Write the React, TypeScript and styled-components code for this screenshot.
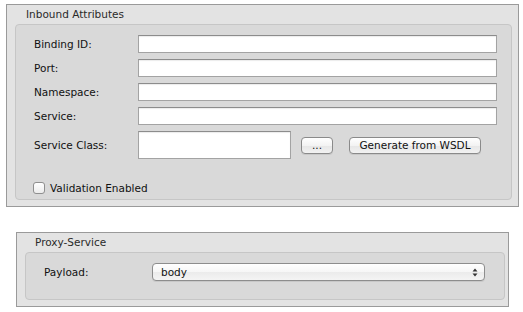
import React from "react";
import styled, { createGlobalStyle } from "styled-components";

const Global = createGlobalStyle`
  html, body { margin: 0; padding: 0; background: #ffffff; }
  body { font-family: "DejaVu Sans", "Liberation Sans", sans-serif; font-size: 11px; color: #1e1e1e; }
`;

const Page = styled.div`
  width: 523px;
  height: 312px;
  box-sizing: border-box;
  padding: 4px 0 0 6px;
  display: flex;
  flex-direction: column;
`;

const Group = styled.section<{ $w: number; $ml: number; $mt: number; $pr: number }>`
  box-sizing: border-box;
  width: ${(p) => p.$w}px;
  margin-left: ${(p) => p.$ml}px;
  margin-top: ${(p) => p.$mt}px;
  background: #e3e3e3;
  border: 1px solid #9a9a9a;
  padding: 0 ${(p) => p.$pr}px 6px 8px;
  display: flex;
  flex-direction: column;
`;

const Title = styled.div<{ $indent: number }>`
  height: 19px;
  line-height: 19px;
  padding-left: ${(p) => p.$indent}px;
  font-size: 10.5px;
  color: #2a2a2a;
`;

const Inner = styled.div<{ $pad: string }>`
  background: #d9d9d9;
  border: 1px solid #c6c6c6;
  border-radius: 4px;
  padding: ${(p) => p.$pad};
  display: flex;
  flex-direction: column;
`;

const Form = styled.div`
  display: grid;
  grid-template-columns: 104px 1fr;
  row-gap: 6px;
  align-items: center;
`;

const Label = styled.label`
  font-size: 10.5px;
  line-height: 12px;
  color: #111;
`;

const TextInput = styled.div<{ $h?: number; $w?: number }>`
  box-sizing: border-box;
  height: ${(p) => p.$h ?? 18}px;
  width: ${(p) => (p.$w ? `${p.$w}px` : "100%")};
  background: #ffffff;
  border: 1px solid #a3a3a3;
  border-top-color: #8c8c8c;
  box-shadow: inset 0 1px 1px rgba(0, 0, 0, 0.08);
`;

const ClassRow = styled.div`
  display: flex;
  align-items: center;
`;

const Button = styled.button<{ $w: number; $ml: number }>`
  box-sizing: border-box;
  width: ${(p) => p.$w}px;
  height: 17px;
  margin-left: ${(p) => p.$ml}px;
  padding: 0;
  border: 1px solid #8a8a8a;
  border-radius: 4px;
  background: linear-gradient(#ffffff, #f3f3f3 50%, #e6e6e6 51%, #f2f2f2);
  box-shadow: 0 1px 0 rgba(0, 0, 0, 0.08);
  font-family: "DejaVu Sans", "Liberation Sans", sans-serif;
  font-size: 10.5px;
  color: #111;
  line-height: 15px;
`;

const CheckRow = styled.div`
  display: flex;
  align-items: center;
  gap: 5px;
  margin-top: 23px;
  margin-left: -1px;
`;

const Box = styled.span`
  box-sizing: border-box;
  width: 12px;
  height: 12px;
  border: 1px solid #8f8f8f;
  border-radius: 3px;
  background: linear-gradient(#ffffff, #ececec);
`;

const PayloadRow = styled.div`
  display: grid;
  grid-template-columns: 108px 1fr;
  align-items: center;
`;

const Select = styled.div`
  box-sizing: border-box;
  height: 18px;
  border: 1px solid #8d8d8d;
  border-radius: 4px;
  background: linear-gradient(#ffffff, #f6f6f6 50%, #ebebeb 51%, #f4f4f4);
  box-shadow: 0 1px 0 rgba(0, 0, 0, 0.08);
  display: flex;
  align-items: center;
  justify-content: space-between;
  padding: 0 6px 0 8px;
  font-size: 10.5px;
  color: #111;
`;

const Arrows = () => (
  <svg width="6" height="9" viewBox="0 0 6 9">
    <path d="M3 0.5 L5.5 3.5 H0.5 Z" fill="#333" />
    <path d="M3 8.5 L5.5 5.5 H0.5 Z" fill="#333" />
  </svg>
);

export default function App() {
  return (
    <>
      <Global />
      <Page>
        <Group $w={513} $ml={0} $mt={0} $pr={6}>
          <Title $indent={11}>Inbound Attributes</Title>
          <Inner $pad="10px 14px 5px 18px">
            <Form>
              <Label>Binding ID:</Label>
              <TextInput />
              <Label>Port:</Label>
              <TextInput />
              <Label>Namespace:</Label>
              <TextInput />
              <Label>Service:</Label>
              <TextInput />
              <Label>Service Class:</Label>
              <ClassRow>
                <TextInput $h={28} $w={153} />
                <Button $w={32} $ml={10}>...</Button>
                <Button $w={132} $ml={16}>Generate from WSDL</Button>
              </ClassRow>
            </Form>
            <CheckRow>
              <Box />
              <Label>Validation Enabled</Label>
            </CheckRow>
          </Inner>
        </Group>
        <Group $w={493} $ml={10} $mt={25} $pr={3}>
          <Title $indent={10}>Proxy-Service</Title>
          <Inner $pad="10px 19px 18px 18px">
            <PayloadRow>
              <Label>Payload:</Label>
              <Select>
                <span>body</span>
                <Arrows />
              </Select>
            </PayloadRow>
          </Inner>
        </Group>
      </Page>
    </>
  );
}
